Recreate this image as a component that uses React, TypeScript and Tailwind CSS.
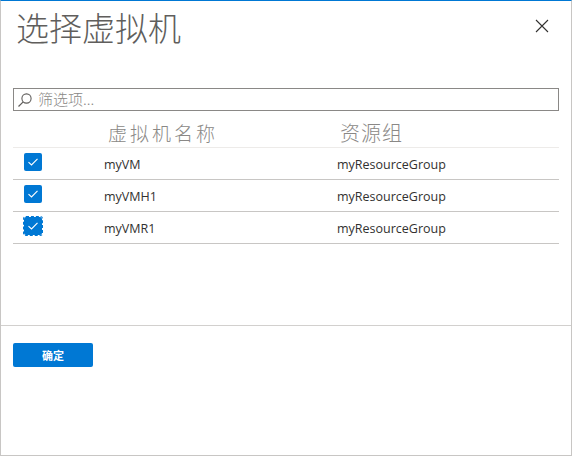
const rows = [
  { name: "myVM", group: "myResourceGroup" },
  { name: "myVMH1", group: "myResourceGroup" },
  { name: "myVMR1", group: "myResourceGroup", focused: true },
];

const cjk = { fontFamily: '"Noto Sans CJK SC", "Noto Sans", sans-serif' };
const latin = { fontFamily: '"Open Sans", "Noto Sans CJK SC", sans-serif' };

function Check({ focused }: { focused?: boolean }) {
  return (
    <div
      className={`w-[18px] h-[18px] rounded-[2px] bg-[#0078d4] flex items-center justify-center ${
        focused ? "outline outline-1 outline-dashed outline-[#0078d4] outline-offset-0" : ""
      }`}
    >
      <svg width="12" height="10" viewBox="0 0 12 10">
        <path d="M1.5 5.2 L4.5 8 L10.5 1.8" fill="none" stroke="white" strokeWidth="1.1" />
      </svg>
    </div>
  );
}

export default function App() {
  return (
    <div className="w-[572px] h-[456px] bg-white border border-[#c8c6c4] border-t-[#0078d4] flex flex-col">
      <div className="h-[56px] flex items-start justify-between pl-[15px] pr-[22px]">
        <h1
          className="text-[33px] leading-[40px] pt-[6px] font-light text-[#605e5c]"
          style={cjk}
        >
          选择虚拟机
        </h1>
        <svg width="14" height="14" viewBox="0 0 14 14" className="mt-[18px]">
          <path d="M1 1 L13 13 M13 1 L1 13" stroke="#323130" strokeWidth="1.1" />
        </svg>
      </div>

      <div className="px-[12px] mt-[31px]">
        <div className="h-[23px] border border-[#8a8886] flex items-center pl-[3px]">
          <svg width="16" height="16" viewBox="0 0 16 16">
            <circle cx="9.5" cy="6.5" r="4.6" fill="none" stroke="#605e5c" strokeWidth="1.1" />
            <path d="M6.2 9.8 L1.5 14.5" stroke="#605e5c" strokeWidth="1.2" />
          </svg>
          <span className="ml-[5px] text-[15px] text-[#8a8886] font-light" style={cjk}>
            筛选项...
          </span>
        </div>

        <div className="h-[37px] border-b border-[#edebe9] flex items-end text-[#8a8886] font-light">
          <span className="ml-[95px] w-[232px] text-[19px] tracking-[3px] leading-[28px]" style={cjk}>
            虚拟机名称
          </span>
          <span className="text-[20px] tracking-[1px] leading-[28px]" style={cjk}>
            资源组
          </span>
        </div>

        {rows.map((r) => (
          <div key={r.name} className="h-[32px] border-b border-[#c8c6c4] flex items-center">
            <div className="ml-[11px] w-[80px] mt-[-3px]">
              <Check focused={r.focused} />
            </div>
            <span className="w-[233px] pt-[4px] text-[12.5px] text-[#323130]" style={latin}>
              {r.name}
            </span>
            <span className="pt-[4px] text-[12.5px] text-[#323130]" style={latin}>
              {r.group}
            </span>
          </div>
        ))}
      </div>

      <div className="mt-[81px] border-t border-[#d2d0ce] pt-[16px] px-[12px]">
        <button
          className="w-[80px] h-[24px] bg-[#0078d4] rounded-[2px] text-white text-[11px] font-bold"
          style={cjk}
        >
          确定
        </button>
      </div>
    </div>
  );
}
